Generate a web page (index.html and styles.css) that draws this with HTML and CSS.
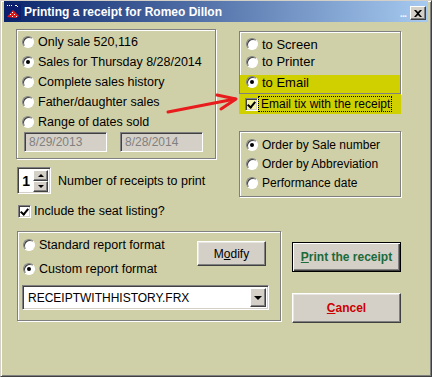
FILE: index.html
```html
<!DOCTYPE html>
<html lang="en">
<head>
  <meta charset="UTF-8" />
  <title>Printing a receipt for Romeo Dillon</title>
  <link rel="stylesheet" href="styles.css">
</head>
<body>

  <div class="window">
    <div class="titlebar">
      <span class="app-icon">
        <svg width="16" height="16" viewBox="0 0 16 16">
          <rect width="16" height="16" fill="#0c1f6e"/>
          <rect x="2" y="1" width="1" height="1" fill="#fff"/>
          <rect x="4" y="1" width="1" height="1" fill="#fff"/>
          <rect x="6" y="1" width="1" height="1" fill="#fff"/>
          <rect x="10" y="1" width="2" height="1" fill="#fff"/>
          <rect x="12" y="2" width="1" height="1" fill="#fff"/>
          <polygon points="2,13 8,6 14,12 11,14" fill="#e01818"/>
          <rect x="7" y="8" width="1" height="1" fill="#fff"/>
          <rect x="5" y="10" width="1" height="1" fill="#fff"/>
          <rect x="9" y="10" width="1" height="1" fill="#fff"/>
          <rect x="7" y="12" width="1" height="1" fill="#fff"/>
          <rect x="11" y="12" width="1" height="1" fill="#fff"/>
        </svg>
      </span>
      <span class="title">Printing a receipt for Romeo Dillon</span>
      <span class="title-dots">...</span>
      <span class="close-btn">
        <svg width="8" height="7" viewBox="0 0 8 7">
          <path d="M0 0 L2 0 L4 2 L6 0 L8 0 L5 3.5 L8 7 L6 7 L4 5 L2 7 L0 7 L3 3.5 Z" fill="#000"/>
        </svg>
      </span>
    </div>

    <div class="main">
      <div class="top-row">
        <div class="left-col">
          <div class="group range-group">
            <div class="opt"><span class="radio"></span>Only sale 520,116</div>
            <div class="opt"><span class="radio checked"></span>Sales for Thursday 8/28/2014</div>
            <div class="opt"><span class="radio"></span>Complete sales history</div>
            <div class="opt"><span class="radio"></span>Father/daughter sales</div>
            <div class="opt"><span class="radio"></span>Range of dates sold</div>
            <div class="dates">
              <span class="field disabled">8/29/2013</span>
              <span class="field disabled">8/28/2014</span>
            </div>
          </div>

          <div class="copies">
            <div class="spinner">
              <span class="spin-value">1</span>
              <span class="spin-btns">
                <span class="spin-btn"><span class="tri-up"></span></span>
                <span class="spin-btn"><span class="tri-down"></span></span>
              </span>
            </div>
            <span>Number of receipts to print</span>
          </div>

          <div class="opt check-row"><span class="check checked"></span>Include the seat listing?</div>
        </div>

        <div class="right-col">
          <div class="group dest-group">
            <div class="opt row-screen"><span class="radio"></span>to Screen</div>
            <div class="opt row-printer"><span class="radio"></span>to Printer</div>
            <div class="opt highlight row-email"><span class="radio checked"></span>to Email</div>
          </div>
          <div class="opt highlight tix-row">
            <span class="check checked pale"></span>
            <span class="focus">Email tix with the receipt</span>
          </div>

          <div class="group order-group">
            <div class="opt"><span class="radio checked"></span>Order by Sale number</div>
            <div class="opt"><span class="radio"></span>Order by Abbreviation</div>
            <div class="opt"><span class="radio"></span>Performance date</div>
          </div>
        </div>
      </div>

      <div class="bottom-row">
        <div class="group format-group">
          <div class="opt fmt-standard"><span class="radio"></span>Standard report format</div>
          <div class="opt fmt-custom"><span class="radio checked"></span>Custom report format</div>
          <button class="btn modify-btn">M<u>o</u>dify</button>
          <div class="combo">
            <span class="combo-text">RECEIPTWITHHISTORY.FRX</span>
            <span class="combo-btn"><span class="tri-down"></span></span>
          </div>
        </div>

        <div class="actions">
          <button class="btn default print-btn"><u>P</u>rint the receipt</button>
          <button class="btn cancel-btn"><u>C</u>ancel</button>
        </div>
      </div>
    </div>

    <!-- hand drawn pointer -->
    <svg class="arrow" width="432" height="377" viewBox="0 0 432 377">
      <g stroke="#e81c1c" stroke-width="3" stroke-linecap="round" stroke-linejoin="round" fill="none">
        <line x1="168" y1="112" x2="235" y2="99"/>
        <polyline points="217,95 236,99 221,109"/>
      </g>
    </svg>
  </div>

</body>
</html>
```

FILE: styles.css
```css
body {
  margin: 0;
  padding: 0;
}

.window {
  position: relative;
  width: 432px;
  height: 377px;
  box-sizing: border-box;
  border: 1px solid;
  border-color: #d4d0c8 #404040 #404040 #d4d0c8;
  box-shadow: inset 1px 1px 0 #fff, inset -1px -1px 0 #808080;
  padding: 0 3px 2px 3px;
  background-color: #d0d0a8;
  font-family: 'Liberation Sans', Arial, sans-serif;
  font-size: 12.5px;
  color: #000;
}

/* title bar */

.titlebar {
  height: 21px;
  display: flex;
  align-items: center;
  padding: 0 2px 0 1px;
  background: linear-gradient(to right, #0a246a, #a6caf0);
  color: #fff;
}

.app-icon {
  width: 16px;
  height: 16px;
  display: flex;
}

.title {
  margin-left: 3px;
  font-weight: bold;
  font-size: 12px;
}

.title-dots {
  margin-left: auto;
  margin-right: 4px;
  font-size: 11px;
  font-weight: bold;
  letter-spacing: -1px;
  color: #eef4ff;
  align-self: flex-start;
  margin-top: 6px;
}

.close-btn {
  width: 16px;
  height: 14px;
  box-sizing: border-box;
  align-self: flex-start;
  margin-top: 5px;
  display: flex;
  align-items: center;
  justify-content: center;
  background-color: #d4d0c8;
  border: 1px solid;
  border-color: #fff #404040 #404040 #fff;
  box-shadow: inset -1px -1px 0 #808080;
}

/* layout */

.main {
  padding: 7px 0 0 12px;
}

.top-row {
  display: flex;
  align-items: flex-start;
}

.left-col {
  width: 200px;
}

.right-col {
  width: 162px;
  margin-left: 23px;
  margin-top: 2px;
}

.bottom-row {
  display: flex;
  align-items: flex-start;
  margin: 10px 0 0 1px;
}

/* group boxes */

.group {
  box-sizing: border-box;
  border: 1px solid #808080;
  box-shadow: 1px 1px 0 #fff, inset 1px 1px 0 #fff;
}

.range-group {
  width: 200px;
  padding: 2px 0 6px 5px;
}

.dest-group {
  width: 162px;
  padding-top: 3px;
  font-size: 13px;
}

.order-group {
  width: 162px;
  margin-top: 17px;
  padding: 3px 0 4px 6px;
  font-size: 12px;
}

.format-group {
  width: 264px;
  padding: 3px 11px 10px 4px;
  display: grid;
  grid-template-columns: 1fr auto;
  grid-template-rows: 20px 20px auto;
  row-gap: 4px;
}

/* option rows */

.opt {
  display: flex;
  align-items: center;
  gap: 4px;
  height: 20px;
  white-space: nowrap;
}

.order-group .opt {
  height: 19px;
}

.row-screen,
.row-printer {
  padding-left: 6px;
}

.row-screen {
  height: 18px;
}

.row-printer {
  height: 17px;
}

.highlight {
  background-color: #d0d000;
}

.row-email {
  margin-top: 5px;
  height: 14px;
  padding: 0 0 4px 6px;
}

.tix-row {
  height: 20px;
  padding-left: 6px;
  gap: 0;
  font-size: 12px;
}

.focus {
  padding: 0 1px 0 2px;
  line-height: 14px;
  border: 1px dotted #000;
}

.fmt-standard,
.fmt-custom {
  padding-left: 1px;
  grid-column: 1;
}

.check-row {
  margin: 7px 0 0 2px;
  gap: 3px;
}

/* radio and check */

.radio {
  position: relative;
  flex: none;
  width: 12px;
  height: 12px;
  box-sizing: border-box;
  border-radius: 50%;
  background-color: #fff;
  border: 1px solid;
  border-color: #808080 #fff #fff #808080;
  box-shadow: inset 1px 1px 0 #404040;
}

.radio.checked::after {
  content: "";
  position: absolute;
  left: 3px;
  top: 3px;
  width: 4px;
  height: 4px;
  border-radius: 50%;
  background-color: #000;
}

.check {
  position: relative;
  flex: none;
  width: 13px;
  height: 13px;
  box-sizing: border-box;
  background-color: #fff;
  border: 1px solid;
  border-color: #808080 #fff #fff #808080;
  box-shadow: inset 1px 1px 0 #404040, inset -1px -1px 0 #d4d0c8;
}

.check.pale {
  background-color: #f4f4a0;
}

.check.checked::after {
  content: "";
  position: absolute;
  left: 3px;
  top: 1px;
  width: 3px;
  height: 6px;
  border: solid #000;
  border-width: 0 2px 2px 0;
  transform: rotate(40deg);
}

/* fields */

.dates {
  display: flex;
  gap: 13px;
  padding-left: 2px;
}

.field {
  width: 83px;
  height: 20px;
  box-sizing: border-box;
  padding-left: 4px;
  display: flex;
  align-items: center;
  font-size: 12px;
  border: 1px solid;
  border-color: #808080 #fff #fff #808080;
  box-shadow: inset 1px 1px 0 #404040, inset -1px -1px 0 #d4d0c8;
}

.field.disabled {
  background-color: #d4d0c8;
  color: #808080;
}

.copies {
  display: flex;
  align-items: center;
  gap: 7px;
  margin: 8px 0 0 1px;
}

.spinner {
  width: 34px;
  height: 27px;
  box-sizing: border-box;
  display: flex;
  align-items: center;
  background-color: #fff;
  border: 1px solid;
  border-color: #808080 #fff #fff #808080;
  box-shadow: inset 1px 1px 0 #404040, inset -1px -1px 0 #d4d0c8;
  padding: 2px 2px 2px 0;
}

.spin-value {
  flex: 1;
  text-align: right;
  padding-right: 3px;
  font-weight: bold;
  font-size: 14px;
}

.spin-btns {
  display: flex;
  flex-direction: column;
}

.spin-btn {
  width: 15px;
  height: 11px;
  box-sizing: border-box;
  display: flex;
  align-items: center;
  justify-content: center;
  background-color: #d4d0c8;
  border: 1px solid;
  border-color: #fff #404040 #404040 #fff;
  box-shadow: inset -1px -1px 0 #808080;
}

.tri-up,
.tri-down {
  width: 0;
  height: 0;
  border-left: 3px solid transparent;
  border-right: 3px solid transparent;
}

.tri-up {
  border-bottom: 3px solid #000;
}

.tri-down {
  border-top: 3px solid #000;
}

.combo {
  grid-column: 1 / 3;
  margin-top: 2px;
  width: 247px;
  height: 25px;
  box-sizing: border-box;
  display: flex;
  align-items: center;
  padding: 2px;
  background-color: #fff;
  border: 1px solid;
  border-color: #808080 #fff #fff #808080;
  box-shadow: inset 1px 1px 0 #404040, inset -1px -1px 0 #d4d0c8;
}

.combo-text {
  flex: 1;
  padding-left: 3px;
  font-size: 12px;
}

.combo-btn {
  width: 16px;
  height: 19px;
  box-sizing: border-box;
  display: flex;
  align-items: center;
  justify-content: center;
  background-color: #d4d0c8;
  border: 1px solid;
  border-color: #fff #404040 #404040 #fff;
  box-shadow: inset -1px -1px 0 #808080;
}

.combo-btn .tri-down {
  border-left-width: 4px;
  border-right-width: 4px;
  border-top-width: 4px;
}

/* buttons */

.btn {
  box-sizing: border-box;
  padding: 0;
  font-family: 'Liberation Sans', Arial, sans-serif;
  font-size: 12px;
  color: #000;
  background-color: #d4d0c8;
  border: 1px solid;
  border-color: #fff #404040 #404040 #fff;
  box-shadow: inset -1px -1px 0 #808080, inset 1px 1px 0 #e8e6e0;
}

.modify-btn {
  grid-column: 2;
  grid-row: 1 / 3;
  align-self: start;
  margin: 6px 3px 0 0;
  width: 69px;
  height: 25px;
}

.actions {
  display: flex;
  flex-direction: column;
  width: 109px;
  margin-left: 11px;
}

.print-btn,
.cancel-btn {
  width: 109px;
  font-weight: bold;
}

.print-btn {
  margin-top: 11px;
  height: 30px;
  color: #1c6a3a;
}

.btn.default {
  border: 1px solid #000;
  box-shadow: inset 1px 1px 0 #fff, inset -1px -1px 0 #404040, inset -2px -2px 0 #808080;
}

.cancel-btn {
  margin-top: 21px;
  height: 30px;
  color: #cc0000;
}

.arrow {
  position: absolute;
  left: -1px;
  top: -1px;
  pointer-events: none;
}
```
